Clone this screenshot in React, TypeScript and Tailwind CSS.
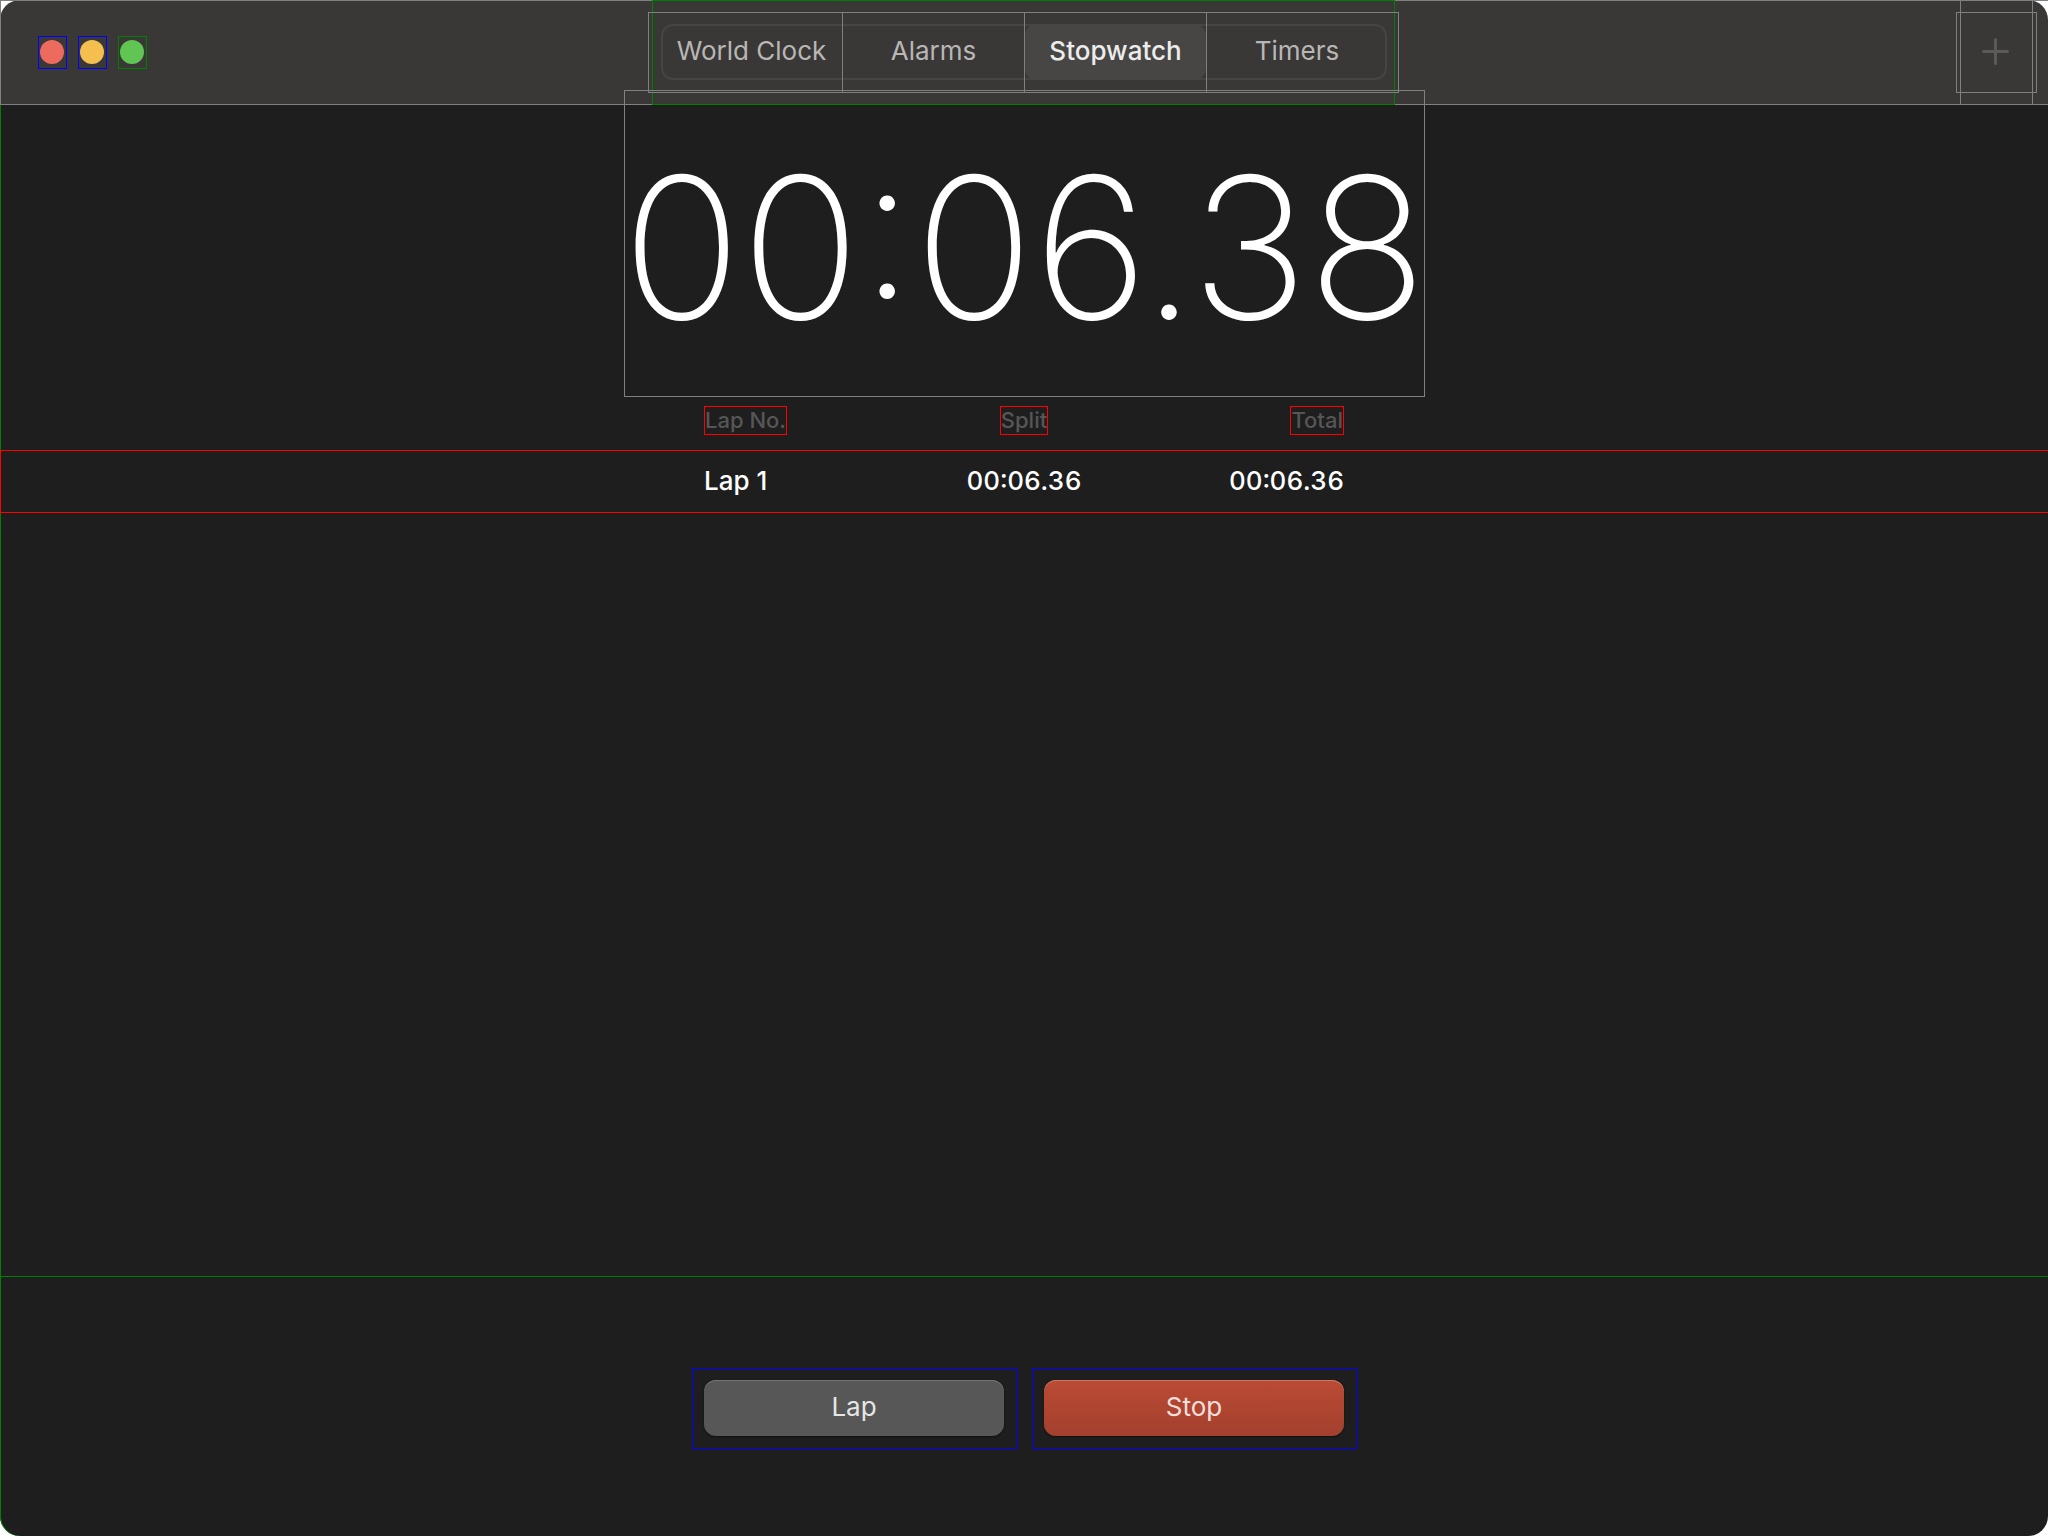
import { useState } from "react";

const tabs = [
  { name: "World Clock", inset: "pl-3 border-r" },
  { name: "Alarms", inset: "border-r" },
  { name: "Stopwatch", inset: "border-r" },
  { name: "Timers", inset: "pr-[11px]" },
];

const windowControls = [
  { label: "Close", frame: "border-[#0000ff]", dot: "bg-[#ed6a5e]" },
  { label: "Minimize", frame: "border-[#0000ff]", dot: "bg-[#f5bf4f]" },
  { label: "Full Screen", frame: "border-[#008000]", dot: "bg-[#61c554]" },
];

const laps = [{ name: "Lap 1", split: "00:06.36", total: "00:06.36" }];

function WindowControls() {
  return (
    <div className="flex gap-[11px] pt-9 pl-[38px]">
      {windowControls.map((control) => (
        <button
          key={control.label}
          type="button"
          aria-label={control.label}
          className={`flex h-[33px] w-[29px] items-start border pt-[3px] pl-px ${control.frame}`}
        >
          <span className={`size-6 rounded-full ${control.dot}`} />
        </button>
      ))}
    </div>
  );
}

function TabBar() {
  const [active, setActive] = useState("Stopwatch");
  return (
    <nav className="mr-px w-[743px] border border-[#008000]">
      <div
        role="tablist"
        className="relative mt-[11px] -ml-[5px] grid h-[81px] w-[751px] grid-cols-[194px_182px_182px_1fr] border border-[#808080] before:pointer-events-none before:absolute before:top-[11px] before:right-[11px] before:bottom-3 before:left-3 before:rounded-xl before:border-2 before:border-[#464543]"
      >
        {tabs.map((tab) => {
          const selected = tab.name === active;
          return (
            <button
              key={tab.name}
              type="button"
              role="tab"
              aria-selected={selected}
              onClick={() => setActive(tab.name)}
              className={`relative flex border-[#808080] pt-[11px] pb-3 text-[26px] ${tab.inset}`}
            >
              <span
                className={`flex flex-1 items-center justify-center self-stretch rounded-xl pb-[3px] leading-8 whitespace-nowrap ${
                  selected ? "bg-[#474644] font-medium text-[#ececec]" : "text-[#b8b7b6]"
                }`}
              >
                {tab.name}
              </span>
            </button>
          );
        })}
      </div>
    </nav>
  );
}

function AddButton() {
  return (
    <div className="mr-[15px] w-[73px] justify-self-end border-x border-[#808080]">
      <button
        type="button"
        aria-label="Add"
        className="mt-3 -ml-[5px] flex h-[81px] w-[81px] items-center justify-center border border-[#808080]"
      >
        <svg viewBox="0 0 27 27" className="mr-0.5 mb-0.5 size-[27px]" fill="none" stroke="#5b5a58" strokeWidth="3" strokeLinecap="round">
          <path d="M13.5 1.5v24M1.5 13.5h24" />
        </svg>
      </button>
    </div>
  );
}

function LapTable() {
  const rowClass = "grid grid-cols-3 px-[calc(50%-320px)]";
  return (
    <table className="mt-[9px] block w-full">
      <thead className="block">
        <tr className={`${rowClass} text-[22px] leading-[27px] text-[#565656]`}>
          <th className="flex font-medium">
            <span className="border border-[#ff0000]">Lap No.</span>
          </th>
          <th className="flex justify-center font-medium">
            <span className="border border-[#ff0000]">Split</span>
          </th>
          <th className="flex justify-end font-medium">
            <span className="border border-[#ff0000]">Total</span>
          </th>
        </tr>
      </thead>
      <tbody className="mt-[15px] block">
        {laps.map((lap) => (
          <tr
            key={lap.name}
            className={`${rowClass} h-[63px] items-center border-y border-[#ff0000] pb-0.5 text-[26px] leading-8 font-medium text-white shadow-[inset_1px_0_0_#ff0000]`}
          >
            <td>{lap.name}</td>
            <td className="text-center tabular-nums">{lap.split}</td>
            <td className="text-right tabular-nums">{lap.total}</td>
          </tr>
        ))}
      </tbody>
    </table>
  );
}

export default function App() {
  return (
    <div className="flex min-h-screen flex-col bg-white font-['Inter',sans-serif]">
      <header className="relative h-[105px]">
        <div className="grid h-full grid-cols-[1fr_auto_1fr] rounded-t-[20px] bg-[#3a3836]">
          <WindowControls />
          <TabBar />
          <AddButton />
        </div>
        <div className="pointer-events-none absolute inset-y-0 left-0 w-[calc(50%-372px)] border-y border-l border-[#808080]" />
        <div className="pointer-events-none absolute inset-y-0 right-0 w-[calc(50%-371px)] border-y border-[#808080]" />
      </header>

      <main className="flex flex-1 flex-col overflow-clip rounded-b-[20px] bg-[#1e1e1e] shadow-[inset_1px_0_0_#008000] [overflow-clip-margin:20px]">
        <div className="flex flex-1 flex-col">
          <div className="relative -mt-[15px] ml-px flex h-[307px] w-[801px] items-center justify-center self-center border border-[#808080] pt-2">
            <time className="text-[197px] leading-none font-extralight text-white">00:06.38</time>
          </div>
          <LapTable />
        </div>

        <footer className="flex h-[260px] justify-center gap-[15px] border-t border-[#008000] pt-[91px] pl-px">
          <div className="h-[81px] border border-[#0000ff] py-[11px] pr-3 pl-[11px]">
            <button
              type="button"
              className="h-14 w-[300px] rounded-xl bg-[#575757] pb-0.5 text-[26px] leading-8 text-[#e6e6e6] shadow-[inset_0_1px_0_#757575,0_1px_2px_#00000080]"
            >
              Lap
            </button>
          </div>
          <div className="h-[81px] border border-[#0000ff] py-[11px] pr-3 pl-[11px]">
            <button
              type="button"
              className="h-14 w-[300px] rounded-xl bg-linear-to-b from-[#ba4b34] to-[#a3402e] pb-0.5 text-[26px] leading-8 text-[#f6dfdb] shadow-[inset_0_1px_0_#cd7b69,0_1px_2px_#00000080]"
            >
              Stop
            </button>
          </div>
        </footer>
      </main>
    </div>
  );
}
